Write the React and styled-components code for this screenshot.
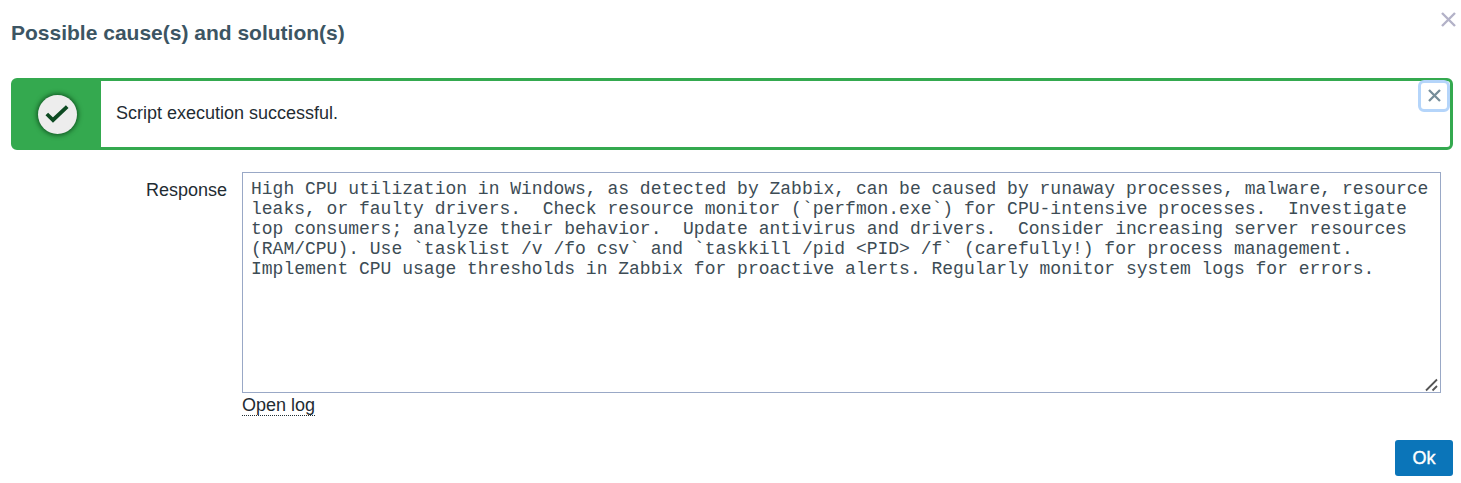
import React from 'react';
import styled, { createGlobalStyle } from 'styled-components';

const GlobalStyle = createGlobalStyle`
  *, *::before, *::after { box-sizing: border-box; }
  body {
    margin: 0;
    background: #fff;
    color: #1f2c33;
    font-family: Arial, "Liberation Sans", sans-serif;
    font-size: 18px;
    line-height: 20px;
  }
`;

const Dialog = styled.main`
  position: relative;
  display: flex;
  flex-direction: column;
  width: 1461px;
  height: 483px;
  padding: 20px 8px 7px 11px;
  overflow: hidden;
`;

const Title = styled.h1`
  margin: 0 0 32px;
  font-size: 21px;
  line-height: 26px;
  font-weight: 700;
  color: #3c5563;
`;

const IconButton = styled.button`
  position: absolute;
  display: flex;
  align-items: center;
  justify-content: center;
  padding: 0;
  border: 0;
  background: transparent;
`;

const DialogClose = styled(IconButton)`
  top: 7px;
  right: 1px;
  width: 24px;
  height: 25px;
  color: #b3b2c8;
`;

const MessageClose = styled(IconButton)`
  top: -1px;
  right: 0;
  width: 32px;
  height: 32px;
  padding-bottom: 1px;
  border: 3px solid #b5d5fa;
  border-radius: 6px;
  color: #768d99;
`;

const Message = styled.section`
  position: relative;
  display: flex;
  flex: none;
  height: 72px;
  border: 3px solid #34a94f;
  border-radius: 6px;
`;

const MessageBadge = styled.div`
  display: flex;
  align-items: center;
  justify-content: center;
  width: 87px;
  background: #34a94f;
`;

const BadgeCircle = styled.div`
  display: flex;
  align-items: center;
  justify-content: center;
  width: 39px;
  height: 39px;
  margin-left: -1px;
  border-radius: 50%;
  background: #ededed;
  box-shadow: 0 0 5px 1px rgba(0, 50, 15, 0.75);
`;

const MessageText = styled.p`
  margin: 22px 0 0 15px;
`;

const FormRow = styled.div`
  display: flex;
  margin-top: 22px;
`;

const Label = styled.label`
  width: 216px;
  margin-right: 15px;
  padding-top: 8px;
  text-align: right;
`;

const Field = styled.div`
  display: flex;
  flex-direction: column;
  align-items: flex-start;
`;

const TextBox = styled.div`
  position: relative;
  width: 1199px;
  height: 221px;
  padding: 6px 8px;
  border: 1px solid #99a8c6;
  font-family: "Courier New", "Liberation Mono", monospace;
  white-space: pre;
  color: #3d4c55;
`;

const ResizeGrip = styled.svg`
  position: absolute;
  right: 1px;
  bottom: 0;
`;

const LogLink = styled.a`
  height: 21px;
  margin-top: 2px;
  border-bottom: 1px dotted #1f2c33;
`;

const Footer = styled.footer`
  display: flex;
  justify-content: flex-end;
  margin-top: auto;
`;

const PrimaryButton = styled.button`
  width: 58px;
  height: 36px;
  padding: 0;
  border: 0;
  border-radius: 3px;
  background: #0b75b9;
  color: #fff;
  font: inherit;
  -webkit-text-stroke: 0.4px #fff;
`;

const responseLines = [
  'High CPU utilization in Windows, as detected by Zabbix, can be caused by runaway processes, malware, resource',
  'leaks, or faulty drivers.  Check resource monitor (`perfmon.exe`) for CPU-intensive processes.  Investigate',
  'top consumers; analyze their behavior.  Update antivirus and drivers.  Consider increasing server resources',
  '(RAM/CPU). Use `tasklist /v /fo csv` and `taskkill /pid <PID> /f` (carefully!) for process management.',
  'Implement CPU usage thresholds in Zabbix for proactive alerts. Regularly monitor system logs for errors.',
];

function Cross({ size, stroke }) {
  return (
    <svg width={size} height={size} viewBox={`0 0 ${size} ${size}`} aria-hidden="true">
      <path
        d={`M1 1L${size - 1} ${size - 1}M${size - 1} 1L1 ${size - 1}`}
        fill="none"
        stroke="currentColor"
        strokeWidth={stroke}
      />
    </svg>
  );
}

export default function App() {
  return (
    <>
      <GlobalStyle />
      <Dialog>
        <Title>Possible cause(s) and solution(s)</Title>
        <DialogClose aria-label="Close dialog">
          <Cross size={15} stroke={2.4} />
        </DialogClose>
        <Message>
          <MessageBadge>
            <BadgeCircle>
              <svg width="24" height="20" viewBox="0 0 24 20" aria-hidden="true">
                <path d="M1.8 10L8 16L22.2 2.6" fill="none" stroke="#0d4a22" strokeWidth="3.8" />
              </svg>
            </BadgeCircle>
          </MessageBadge>
          <MessageText>Script execution successful.</MessageText>
          <MessageClose aria-label="Close message">
            <Cross size={13} stroke={2.3} />
          </MessageClose>
        </Message>
        <FormRow>
          <Label>Response</Label>
          <Field>
            <TextBox>
              {responseLines.join('\n')}
              <ResizeGrip width="14" height="14" viewBox="0 0 14 14">
                <path d="M1 12.5L12 1.5M7.5 12.5L12 8" fill="none" stroke="#555" strokeWidth="1.8" />
              </ResizeGrip>
            </TextBox>
            <LogLink>Open log</LogLink>
          </Field>
        </FormRow>
        <Footer>
          <PrimaryButton>Ok</PrimaryButton>
        </Footer>
      </Dialog>
    </>
  );
}
